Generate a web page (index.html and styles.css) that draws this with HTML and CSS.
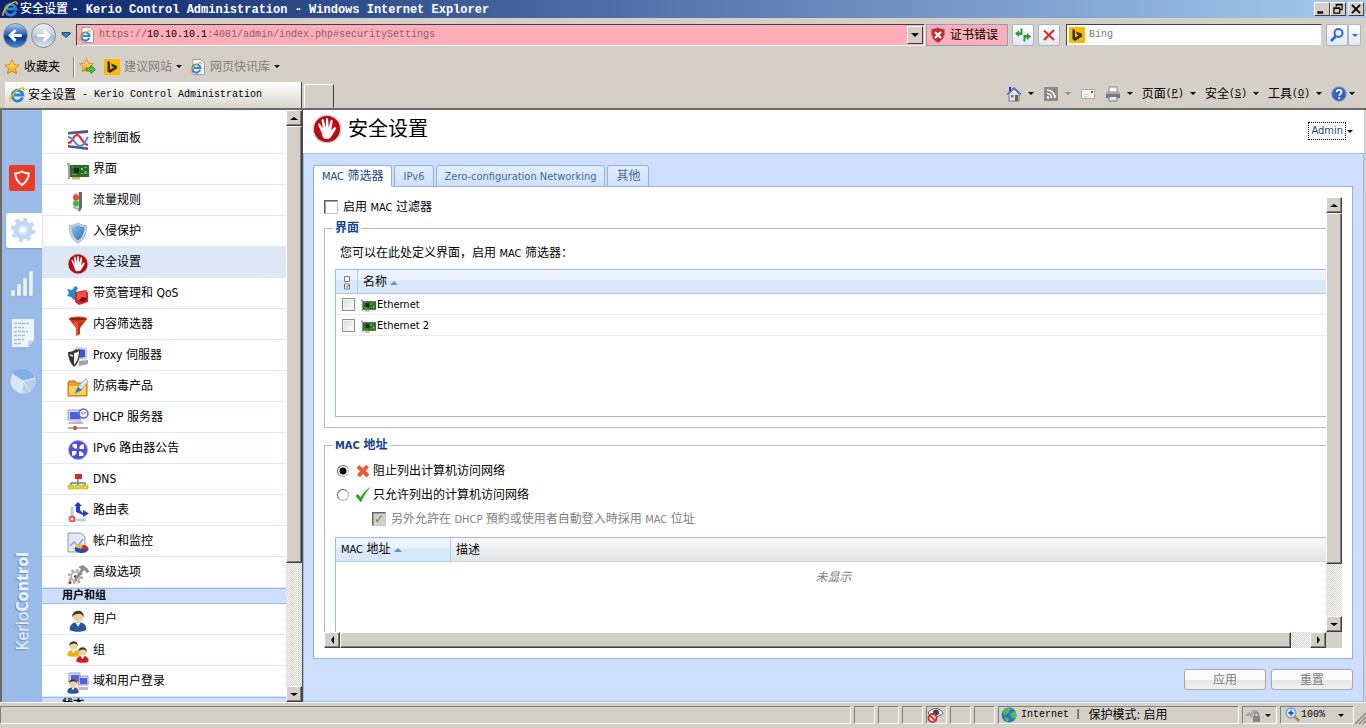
FILE: index.html
```html
<!DOCTYPE html>
<html lang="zh-CN">
<head>
  <meta charset="UTF-8" />
  <meta name="viewport" content="width=device-width, initial-scale=1.0"/>
  <title>安全设置 - Kerio Control Administration</title>
  <link rel="stylesheet" href="styles.css">
</head>
<body>
  <!-- shared icons -->
  <svg class="defs" aria-hidden="true">
    <defs>
      <radialGradient id="gRed"><stop offset="0" stop-color="#e8202a"/><stop offset="1" stop-color="#b0050c"/></radialGradient>
      <linearGradient id="gSteel" x1="0" y1="0" x2="1" y2="1"><stop offset="0" stop-color="#8cc4f2"/><stop offset="1" stop-color="#2b6cb4"/></linearGradient>
      <linearGradient id="gStar" x1="0" y1="0" x2="0" y2="1"><stop offset="0" stop-color="#ffe98a"/><stop offset="1" stop-color="#f0a011"/></linearGradient>
    </defs>
    <symbol id="ie" viewBox="0 0 16 16">
      <path d="M13.600 10.600A5.400 5.400 0 1 1 13.900 8H5" fill="none" stroke="#2a86d8" stroke-width="2.800"/>
      <path d="M1.200 14.800C-.6 12 5 4.400 11 1.600c3-1.400 4.600-.6 3.800 1.800" fill="none" stroke="#f2b01c" stroke-width="1.500"/>
    </symbol>
    <symbol id="iepage" viewBox="0 0 16 16">
      <path d="M3 .5h8l3.500 3.500v11.500H3z" fill="#fff" stroke="#9a9a9a"/>
      <use href="#ie" x="0" y="3" width="12" height="12"/>
    </symbol>
    <symbol id="bing" viewBox="0 0 16 16">
      <path d="M0 0h16v16H0z" fill="#ffb900"/>
      <path d="M3.500 2l2.500.9v7.500l4-2.100-2-.9-1-2.800 6 2.100v2.900L6 14l-2.500-1.400z" fill="#333"/>
    </symbol>
    <symbol id="star" viewBox="0 0 16 16">
      <path d="M8 .8l2.200 4.800 5.200.6-3.900 3.500 1.100 5.200L8 12.300l-4.600 2.600 1.100-5.200L.6 6.200l5.200-.6z" fill="url(#gStar)" stroke="#c98208" stroke-width=".8"/>
    </symbol>
    <symbol id="hand" viewBox="0 0 32 32">
      <circle cx="16" cy="16" r="15.300" fill="#c9c9c9"/>
      <circle cx="16" cy="16" r="13.800" fill="url(#gRed)"/>
      <path d="M10.500 20.500L6.700 11.600c-.5-1.600 1.300-2.300 2-.8l2.900 5L10.200 7c-.2-1.800 2-2.200 2.400-.4l2.200 8.300.1-9.300c0-1.700 2.200-1.700 2.300 0l.6 9.300 2-7.800c.4-1.700 2.500-1.200 2.200.5l-1.500 10.100 2.700-3c1.300-1.300 3.300-.4 2.300 1.200l-4.400 7.300c-.9 1.800-2.100 2.600-3.200 3.100l-4.600.1c-1.600-1-2.400-3.400-2.800-5.900z" fill="#fff"/>
    </symbol>
    <symbol id="card" viewBox="0 0 22 18">
      <path d="M0 2h2v15" fill="none" stroke="#8b8b8b" stroke-width="1.600"/>
      <path d="M3 3h19v12H3z" fill="#2d6b2e"/>
      <path d="M5 15h8v2.500H5z" fill="#d7b85b"/>
      <path d="M7 6h5v5H7z" fill="#12301b"/>
      <path d="M14 6h2v2h-2zM17.500 9h2v3h-2zM14 11h2v1h-2z" fill="#8fc46b"/>
      <path d="M4.500 5h2M4.500 12.500h5M17 5.500h3" stroke="#69a552"/>
    </symbol>
    <symbol id="person" viewBox="0 0 22 22">
      <path d="M3 20c0-4 2-6.500 5.500-7h5c3.500.5 5.500 3 5.500 7-4 2.300-12 2.300-16 0z" fill="currentColor"/>
      <path d="M8.500 13l2.500 4 2.500-4z" fill="#fff"/>
      <circle cx="11" cy="7.500" r="5" fill="#f3cf9c"/>
      <path d="M5.500 8c-.8-8 11.800-8.800 11 0-1.500-3-3-3.800-6-3.300C8 5 6.500 5.500 5.500 8z" fill="#3a3a34"/>
    </symbol>
  </svg>

  <header class="titlebar">
    <svg class="i16"><use href="#ie"/></svg>
    <h1>安全设置 <span>- Kerio Control Administration - Windows Internet Explorer</span></h1>
    <div class="win-buttons">
      <button aria-label="Minimize"><svg viewBox="0 0 12 10"><path d="M2 8h5" stroke="#000" stroke-width="2"/></svg></button>
      <button aria-label="Restore"><svg viewBox="0 0 12 10"><path d="M4.500 3V1.500h5v4H8M4 1h6M2.500 4.500h5v4h-5zM2 4h6" fill="none" stroke="#000"/></svg></button>
      <button class="close" aria-label="Close"><svg viewBox="0 0 12 10"><path d="M2.500 1.500l7 7M9.500 1.500l-7 7" stroke="#000" stroke-width="1.500"/></svg></button>
    </div>
  </header>

  <div class="navbar">
    <div class="history">
      <button class="round back" aria-label="Back"><svg viewBox="0 0 24 24"><path d="M18.500 12H7M12 6.500L6.500 12l5.500 5.500" fill="none" stroke="#fff" stroke-width="3"/></svg></button>
      <button class="round forward" aria-label="Forward"><svg viewBox="0 0 24 24"><path d="M5.500 12H17M12 6.500l5.500 5.500-5.500 5.500" fill="none" stroke="#fff" stroke-width="3"/></svg></button>
      <button class="flat" aria-label="Recent pages"><svg class="recent" viewBox="0 0 10 6"><path d="M1 .5h8v1.500L5 5.500 1 2z" fill="#2e88c4" stroke="#17507c"/></svg></button>
    </div>
    <div class="address">
      <svg class="i16"><use href="#iepage"/></svg>
      <div class="url" role="textbox" aria-label="Address" contenteditable="true">https://<b>10.10.10.1</b>:4081/admin/index.php#securitySettings</div>
      <button class="combo" aria-label="Show addresses"><i class="down"></i></button>
    </div>
    <button class="cert"><svg class="i16" viewBox="0 0 16 16"><path d="M8 .5c2 1.300 4 1.700 6.500 1.700C15 9 13 13.500 8 15.500 3 13.500 1 9 1.500 2.200 4 2.200 6 1.800 8 .5z" fill="#c8262b" stroke="#8d8d8d"/><path d="M5 5l6 6M11 5l-6 6" stroke="#fff" stroke-width="2.200"/></svg>证书错误</button>
    <button class="tool" aria-label="Refresh"><svg class="i16" viewBox="0 0 16 16"><path d="M0 6.500L4 3v2.500h1.500V1.500h2V8H4v2zM16 9.500L12 13v-2.500h-1.500v4h-2V8H12V6z" fill="#2e9a2e"/></svg></button>
    <button class="tool" aria-label="Stop"><svg class="i16" viewBox="0 0 16 16"><path d="M3 3.500l10 9.500M13 3L3 13" stroke="#cf3434" stroke-width="2.200"/></svg></button>
    <div class="search">
      <svg class="i16"><use href="#bing"/></svg>
      <input type="text" placeholder="Bing" aria-label="Search">
    </div>
    <div class="search-buttons">
      <button aria-label="Search"><svg class="i16" viewBox="0 0 16 16"><circle cx="9.500" cy="6" r="4" fill="#eaf3ff" stroke="#2f68d8" stroke-width="2"/><path d="M6.500 9.500L2 14" stroke="#2f68d8" stroke-width="2.600"/></svg></button>
      <button class="narrow" aria-label="Search options"><i class="down blue"></i></button>
    </div>
  </div>

  <nav class="favorites">
    <a href="#" class="fav"><svg class="i16"><use href="#star"/></svg>收藏夹</a>
    <i class="divider"></i>
    <button class="flat" aria-label="Add to favorites"><svg class="i17" viewBox="0 0 17 17"><use href="#star" width="15" height="15"/><path d="M7 10h5V7.500l4.500 4-4.500 4V13H7z" fill="#58c83c" stroke="#247d1a" stroke-width=".8"/></svg></button>
    <a href="#" class="muted"><svg class="i16"><use href="#bing"/></svg>建议网站<i class="down"></i></a>
    <a href="#" class="muted"><svg class="i16"><use href="#iepage"/></svg>网页快讯库<i class="down"></i></a>
  </nav>

  <div class="tabbar">
    <a href="#" class="browser-tab"><svg class="i16"><use href="#ie"/></svg>安全设置 <span class="mono">- Kerio Control Administration</span></a>
    <button class="new-tab" aria-label="New tab"></button>
    <div class="commands">
      <a href="#" aria-label="Home"><svg class="i16" viewBox="0 0 16 16"><path d="M3 8v7h10V8L8 3z" fill="#e6e9f2" stroke="#6c7690"/><path d="M1 8.500L8 2l7 6.500" fill="none" stroke="#5470c0" stroke-width="1.600"/><path d="M3 1h2v4H3z" fill="#24389c"/><path d="M9 9h3v6H9z" fill="#8b5a2d"/><path d="M5 9h2.500v2.500H5z" fill="#4776c4"/></svg><i class="down"></i></a>
      <a href="#" aria-label="Feeds"><svg class="i16" viewBox="0 0 16 16"><rect x="1" y="1" width="14" height="14" rx="1" fill="#8b8b8b"/><circle cx="5" cy="11.500" r="1.300" fill="#fff"/><path d="M4 7.500a4.500 4.500 0 0 1 4.500 4.500M4 4a8 8 0 0 1 8 8" fill="none" stroke="#fff" stroke-width="1.600"/></svg><i class="down gray"></i></a>
      <a href="#" aria-label="Mail"><svg class="i16" viewBox="0 0 16 16"><path d="M1.500 3.500h13v9h-13z" fill="#f7f7f7" stroke="#aaa"/><path d="M11 5h2v2h-2z" fill="#d02020"/><path d="M4 8.500h5M4 10.500h4" stroke="#ccc"/></svg></a>
      <a href="#" aria-label="Print"><svg class="i16" viewBox="0 0 16 16"><path d="M4 1h8v5H4z" fill="#fff" stroke="#888"/><path d="M1 6h14v6H1z" fill="#777"/><path d="M1 6h14v2H1z" fill="#aaa"/><path d="M4 10.500h8v4.500H4z" fill="#d8efff" stroke="#777"/></svg><i class="down"></i></a>
      <a href="#">页面<span class="mono">(<u>P</u>)</span><i class="down"></i></a>
      <a href="#">安全<span class="mono">(<u>S</u>)</span><i class="down"></i></a>
      <a href="#">工具<span class="mono">(<u>O</u>)</span><i class="down"></i></a>
      <a href="#" class="help" aria-label="Help"><svg class="i16" viewBox="0 0 16 16"><circle cx="8" cy="8" r="7.300" fill="#3563c4" stroke="#8aa3d6"/><path d="M5.500 6.300C5.500 3 10.500 3 10.500 6c0 1.800-2.300 1.900-2.300 3.800M8.200 11v2" fill="none" stroke="#fff" stroke-width="1.800"/></svg><i class="down"></i></a>
    </div>
  </div>

  <div class="page">
    <aside class="rail">
      <a href="#" class="rail-logo" aria-label="Dashboard"><svg viewBox="0 0 26 26"><rect width="26" height="26" rx="2" fill="#ea3a2a"/><path d="M13 6.500c2 1.200 4 1.800 6.800 2-.2 4.500-2.300 8.300-6.800 11.500-4.500-3.200-6.600-7-6.800-11.500 2.800-.2 4.800-.8 6.800-2z" fill="none" stroke="#fff" stroke-width="2"/></svg></a>
      <a href="#" class="rail-active" aria-label="Configuration"><svg viewBox="0 0 26 26"><circle cx="13" cy="13" r="7" fill="none" stroke="#c3d8f3" stroke-width="5"/><circle cx="13" cy="13" r="10.600" fill="none" stroke="#c3d8f3" stroke-width="3.500" stroke-dasharray="4.160 4.160"/><circle cx="13" cy="13" r="3.600" fill="none" stroke="#dce9fa" stroke-width="2"/></svg></a>
      <a href="#" class="rail-stats" aria-label="Status"><svg viewBox="0 0 26 28"><path d="M1 21h4v6H1zM7 15h4v12H7zM13 9h4v18h-4zM19 2h4v25h-4z" fill="#eff5fd" stroke="#84a6d4" stroke-width=".4"/></svg></a>
      <a href="#" class="rail-logs" aria-label="Logs"><svg viewBox="0 0 26 28"><path d="M2 0h22v21l-6 7H2z" fill="#eff5fd"/><path d="M24 21l-6 7v-6z" fill="#c5d8f0"/><path d="M4 4.500h15M4 8.500h10M4 12.500h14M4 16.500h11M4 20.500h10M4 24.500h7" stroke="#9dbde8" stroke-width="1.500" stroke-dasharray="3 1"/></svg></a>
      <a href="#" class="rail-chart" aria-label="Reports"><svg viewBox="0 0 26 26"><circle cx="13" cy="13" r="12.500" fill="#d7e5f7"/><path d="M13 13L2 6A13 13 0 0 1 25 10z" fill="#82aee8"/><path d="M13 13L25 10a12.500 12.500 0 0 1-12 15.500z" fill="#b7cfee"/><path d="M13 13L2 6M13 13l12-3M13 13l7 11M13 13L9 25" stroke="#e8f1fc"/></svg></a>
      <div class="brand">Kerio<b>Control</b></div>
    </aside>

    <nav class="menu">
      <ul>
        <li><a href="#"><svg viewBox="0 0 22 22"><path d="M1 3l20-2v20L1 18z" fill="#f5f6fb"/><path d="M1 3l20-2v3L1 5.500zM1 16l20 2.500V21L1 18.500z" fill="#55547e"/><path d="M1 14c5 0 5-8 9-8s5 9 11 10" fill="none" stroke="#e02a2a" stroke-width="2"/><path d="M1 8c6 0 7 9 12 9 4 0 5-4 8-9" fill="none" stroke="#3c8fdc" stroke-width="1.800"/></svg>控制面板</a></li>
        <li><a href="#"><svg viewBox="0 0 22 18"><use href="#card"/></svg>界面</a></li>
        <li><a href="#"><svg viewBox="0 0 22 22"><path d="M6 3l8-2v19l-2 1-3-3-3-1z" fill="#aaa"/><path d="M12 1h3v16l-3 3z" fill="#686868"/><path d="M6 3l6-1v15l-6-1z" fill="#d8d8d8"/><circle cx="9" cy="6.500" r="2.900" fill="#f04426"/><circle cx="9" cy="12.500" r="2.900" fill="#2cc42c"/></svg>流量规则</a></li>
        <li><a href="#"><svg viewBox="0 0 22 22"><path d="M11 1c3 2 5.500 2.500 8.500 2.500 0 8-2 14-8.500 17.500C4.500 17.500 2.500 11.500 2.500 3.500 5.500 3.500 8 3 11 1z" fill="#cbd8e4" stroke="#a5b0bb"/><path d="M11 3c2 1.300 4 2 6.500 2-.2 6-2 10.500-6.500 13.500C6.500 15.500 4.700 11 4.500 5 7 5 9 4.300 11 3z" fill="url(#gSteel)"/></svg>入侵保护</a></li>
        <li class="active"><a href="#"><svg viewBox="0 0 32 32"><use href="#hand"/></svg>安全设置</a></li>
        <li><a href="#"><svg viewBox="0 0 22 22"><path d="M0 5l5 1 3-4 3 2-2 4 4 1-1 6-5 1-3-3-4-1 2-3z" fill="#238bca"/><path d="M8 8l11-2 2 3v9l-9 3-4-3z" fill="#d32a22"/><path d="M10 9l9-2v8l-9 1z" fill="#ef5544"/><path d="M12 17l3-4 5 1-3 4z" fill="#77100f"/></svg>带宽管理和 QoS</a></li>
        <li><a href="#"><svg viewBox="0 0 22 22"><path d="M2 4l7 9v8l4-2v-6l7-9z" fill="#cf2f14"/><path d="M9 13v7l2-1V7H6z" fill="#e8552e"/><ellipse cx="11" cy="4" rx="9" ry="2" fill="#8f1d10" stroke="#e54a28"/></svg>内容筛选器</a></li>
        <li><a href="#"><svg viewBox="0 0 22 22"><path d="M9 1l11 1v11l-10 1z" fill="#c5cbdc"/><path d="M11 3l7 1v7l-7 1z" fill="#3c58d4"/><path d="M12 15l9-1v4l-9 2z" fill="#9ba2ae"/><path d="M1 6c3 0 6-1 8-3 1 1 2 1 4 1 0 8-2 14-6 17-4-4-6-9-6-15z" fill="#353535"/><path d="M7 7c2 0 3-1 5-2 0 6-2 11-5 14z" fill="#f2f2f2"/><path d="M3 9l3 1M8 10l3-2" stroke="#eee" stroke-width="1.500"/></svg>Proxy 伺服器</a></li>
        <li><a href="#"><svg viewBox="0 0 22 22"><path d="M1 5l1-1h6l2 2h10v13H1z" fill="#e7a12c" stroke="#b97712"/><path d="M2 9h17v9H2z" fill="#fcd25b"/><path d="M19 1l-8 9-3 7 6-4 7-8z" fill="#dce8f3" stroke="#8ba3bd" stroke-width=".8"/><path d="M8 16l3-6 4 3z" fill="#2279c5"/></svg>防病毒产品</a></li>
        <li><a href="#"><svg viewBox="0 0 22 22"><path d="M1 2h13v10H1z" fill="#d7dbe7" stroke="#9ba0ae"/><path d="M3 4h10v7H3z" fill="#4b5ee8"/><path d="M2 14l12-1 3 3H1z" fill="#b7bbc2"/><circle cx="16.500" cy="5.500" r="4.500" fill="#eef4ff" stroke="#5370bc" stroke-width="1.500"/><path d="M14 4l2.500 2L19 4" fill="none" stroke="#d24444"/><path d="M1 20h20" stroke="#777" stroke-width="1.200"/><path d="M8 18v4" stroke="#e33c2d" stroke-width="3"/></svg>DHCP 服务器</a></li>
        <li><a href="#"><svg viewBox="0 0 22 22"><circle cx="11" cy="11" r="9.500" fill="#4b52cf" stroke="#9ba0ec"/><path d="M5 5h5v5zM17 5v5h-5zM5 17v-5h5zM17 17h-5v-5z" fill="#fff"/><path d="M6 6l3 3M16 6l-3 3M6 16l3-3M16 16l-3-3" stroke="#fff" stroke-width="2.500"/></svg>IPv6 路由器公告</a></li>
        <li><a href="#"><svg viewBox="0 0 22 22"><path d="M11 8v5M4 17v-4h14v4M11 13v4" fill="none" stroke="#7e7e7e" stroke-width="1.500"/><path d="M8 4h7v5H8z" fill="#de2828"/><path d="M1 15h6v4H1zM8 15h6v4H8zM15 15h6v4h-6z" fill="#dcd72b" stroke="#b1ac1e" stroke-width=".6"/></svg>DNS</a></li>
        <li><a href="#"><svg viewBox="0 0 22 22"><path d="M5 19V6M5 19h14" stroke="#c4cbdd" stroke-width="3"/><path d="M7 5l4-4 4 4h-2v4l3 3V9l6 3.500-6 3.500v-2l-7-3V5z" fill="#2340cc"/><circle cx="5" cy="18" r="2.400" fill="#fff" stroke="#ee3e3e" stroke-width="1.700"/></svg>路由表</a></li>
        <li><a href="#"><svg viewBox="0 0 22 22"><path d="M1 1h13l4 4v15H1z" fill="#e3e9f6" stroke="#8d99b6"/><path d="M3 14l4-4 4 4 5-7" fill="none" stroke="#92a4c9" stroke-width="1.500"/><ellipse cx="14.500" cy="17" rx="7" ry="4" fill="#2948b8"/><path d="M14.500 17L8 15c2-3 6-3 8-2z" fill="#f3c126"/><path d="M14.500 17L16 13c4 0 6 3 5 5z" fill="#d3292b"/></svg>帐户和监控</a></li>
        <li><a href="#"><svg viewBox="0 0 22 22"><circle cx="8.500" cy="13.500" r="4.500" fill="#fff" stroke="#b4b4b4" stroke-width="2"/><circle cx="8.500" cy="13.500" r="6.500" fill="none" stroke="#a5a5a5" stroke-width="2" stroke-dasharray="2.550 2.550"/><circle cx="8.500" cy="13.500" r="1.600" fill="#c32727"/><path d="M11 4l5-2 5 4 1 3-2 1-3-3-8 11-2-1 7-11z" fill="#8e8e8e"/><circle cx="3" cy="19.500" r="1.500" fill="#c32727"/></svg>高级选项</a></li>
      </ul>
      <h2>用户和组</h2>
      <ul>
        <li><a href="#"><svg class="c-blue" viewBox="1 1 20 21"><use href="#person" width="22" height="22"/></svg>用户</a></li>
        <li><a href="#"><svg viewBox="0 0 22 22"><use class="c-yellow" href="#person" x="-2" y="-1" width="17" height="17"/><use class="c-red" href="#person" x="7" y="5" width="17" height="17"/></svg>组</a></li>
        <li><a href="#"><svg class="c-blue" viewBox="0 0 22 22"><path d="M2 1h11v9H2zM11 4h10v9H11z" fill="#cfd3e6" stroke="#979dbd"/><path d="M4 3h8v6H4zM13 6h7v6h-7z" fill="#4d62e6"/><path d="M12 15h9v3h-9z" fill="#b9bcc9"/><use href="#person" x="-2" y="6" width="16" height="16"/></svg>域和用户登录</a></li>
      </ul>
      <h2>状态</h2>
    </nav>
    <div class="scroll-v menu-scroll">
      <button aria-label="Scroll up"><i class="up"></i></button>
      <div class="thumb"></div>
      <div class="track"></div>
      <button aria-label="Scroll down"><i class="down"></i></button>
    </div>

    <main>
      <div class="heading">
        <svg viewBox="0 0 32 32"><use href="#hand"/></svg>
        <h2>安全设置</h2>
        <button class="user"><span>Admin</span><i class="down"></i></button>
      </div>

      <div class="workspace">
        <div class="tabs" role="tablist">
          <button role="tab" class="selected" aria-selected="true"><span class="latin">MAC</span> 筛选器</button>
          <button role="tab"><span class="latin">IPv6</span></button>
          <button role="tab"><span class="latin">Zero-configuration Networking</span></button>
          <button role="tab">其他</button>
        </div>

        <div class="panel">
          <div class="view">
            <div class="content">
              <div class="enable">
                <input type="checkbox" id="enable-mac">
                <label for="enable-mac">启用 <span class="latin">MAC</span> 过滤器</label>
              </div>

              <fieldset class="interfaces">
                <legend>界面</legend>
                <p>您可以在此处定义界面，启用 <span class="latin">MAC</span> 筛选器：</p>
                <div class="grid">
                  <table>
                    <thead>
                      <tr>
                        <th class="pick"><svg viewBox="0 0 8 14"><path d="M1.500.5h5v5h-5zM1.500 8h5v5h-5z" fill="#fff" stroke="#777"/><path d="M2.500 10l1.500 1.500L6 9" fill="none" stroke="#3c68ad"/></svg></th>
                        <th>名称 <i class="sort"></i></th>
                      </tr>
                    </thead>
                    <tbody>
                      <tr>
                        <td class="pick"><input type="checkbox" id="eth1"></td>
                        <td><label class="latin" for="eth1"><svg viewBox="0 0 22 18" preserveAspectRatio="none"><use href="#card"/></svg>Ethernet</label></td>
                      </tr>
                      <tr>
                        <td class="pick"><input type="checkbox" id="eth2"></td>
                        <td><label class="latin" for="eth2"><svg viewBox="0 0 22 18" preserveAspectRatio="none"><use href="#card"/></svg>Ethernet 2</label></td>
                      </tr>
                    </tbody>
                  </table>
                </div>
              </fieldset>

              <fieldset class="addresses">
                <legend><span class="latin">MAC</span> 地址</legend>
                <div class="option">
                  <input type="radio" name="mode" id="deny" checked>
                  <label for="deny"><svg viewBox="0 0 16 16"><path d="M3 3.500l10 9.500M12.500 3L3.500 13" stroke="#f1553b" stroke-width="4"/></svg>阻止列出计算机访问网络</label>
                </div>
                <div class="option">
                  <input type="radio" name="mode" id="allow">
                  <label for="allow"><svg viewBox="0 0 16 16"><path d="M.5 9l2.500-2 2.500 3.500C8 6 11 2.500 15.500 0 11 5 8.500 9.500 6 15.500z" fill="#1cae1c"/></svg>只允许列出的计算机访问网络</label>
                </div>
                <div class="option sub">
                  <input type="checkbox" id="dhcp" checked disabled>
                  <label for="dhcp">另外允許在 <span class="latin">DHCP</span> 預約或使用者自動登入時採用 <span class="latin">MAC</span> 位址</label>
                </div>
                <div class="grid">
                  <table>
                    <thead>
                      <tr>
                        <th class="mac"><span class="latin">MAC</span> 地址 <i class="sort"></i></th>
                        <th class="plain">描述</th>
                      </tr>
                    </thead>
                    <tbody>
                      <tr class="empty"><td colspan="2">未显示</td></tr>
                    </tbody>
                  </table>
                </div>
              </fieldset>
            </div>
          </div>
          <div class="scroll-v">
            <button aria-label="Scroll up"><i class="up"></i></button>
            <div class="thumb"></div>
            <div class="track"></div>
            <button aria-label="Scroll down"><i class="down"></i></button>
          </div>
          <div class="scroll-h">
            <button aria-label="Scroll left"><i class="left"></i></button>
            <div class="thumb"></div>
            <div class="track"></div>
            <button aria-label="Scroll right"><i class="right"></i></button>
          </div>
          <div class="corner"></div>
        </div>

        <div class="actions">
          <button disabled>应用</button>
          <button disabled>重置</button>
        </div>
      </div>
    </main>
  </div>

  <footer class="statusbar">
    <div class="pane message"></div>
    <div class="pane"></div>
    <div class="pane"></div>
    <div class="pane"></div>
    <div class="pane"><svg class="i16" viewBox="0 0 16 16"><path d="M1 6c4-6 11-6 15 0-4 5-11 5-15 0z" fill="#fff" stroke="#555"/><circle cx="9" cy="5.500" r="3" fill="#444"/><circle cx="5.500" cy="11" r="4" fill="#fff" stroke="#d62d2d" stroke-width="2"/><path d="M3 8.500l5 5" stroke="#d62d2d" stroke-width="1.800"/></svg></div>
    <div class="pane"></div>
    <div class="pane"></div>
    <div class="pane zone"><svg class="i16" viewBox="0 0 16 16"><circle cx="8" cy="8" r="7.500" fill="#2f74d0"/><path d="M2 4c3-4 7-4 8-2L8 5 5 8 2 7zM9 7l5-3c2 3 2 6 0 8l-3-1zM3 10l5 1-1 4c-3-1-4-3-4-5z" fill="#57b947"/></svg><span class="mono">Internet |</span> 保护模式: 启用</div>
    <div class="pane lock"><svg class="i16" viewBox="0 0 16 16"><path d="M0 9l5-5v3c3-6 6-5 8-2-3-1-5 1-6 5l-2 2V9z" fill="#aaa"/><path d="M8 9h7v6H8z" fill="#888"/><path d="M9.500 9V7.500a2 2 0 0 1 4 0V9" fill="none" stroke="#888" stroke-width="1.500"/></svg><i class="down"></i></div>
    <div class="pane magnify"><svg class="i16" viewBox="0 0 16 16"><path d="M9 9l5 5" stroke="#b7884a" stroke-width="3"/><circle cx="6" cy="6" r="4.800" fill="#d9ecff" stroke="#7ba0d2" stroke-width="1.500"/><path d="M6 3.500v5M3.500 6h5" stroke="#1c56c8" stroke-width="1.800"/></svg><span class="mono">100%</span><i class="down"></i></div>
    <svg class="grip" viewBox="0 0 12 14"><path d="M1 13L12 2M5 13l7-7M9 13l3-3" stroke="#8a867e" stroke-width="1.500"/></svg>
  </footer>
</body>
</html>
```
FILE: styles.css
```css
* {
  margin: 0;
  padding: 0;
  box-sizing: border-box;
}
body {
  height: 100vh;
  display: flex;
  flex-direction: column;
  overflow: hidden;
  background: #d4d0c8;
  color: #000;
  font-family: "DejaVu Sans Condensed", "Noto Sans CJK SC", sans-serif;
  font-size: 12px;
  line-height: 16px;
}
button, input {
  font: inherit;
  color: inherit;
}
a {
  color: inherit;
  text-decoration: none;
}
ul {
  list-style: none;
}
.defs {
  position: absolute;
  width: 0;
  height: 0;
}
.i16 {
  width: 16px;
  height: 16px;
  flex: none;
}
.i17 {
  width: 17px;
  height: 17px;
  display: block;
}
.flat {
  background: none;
  border: none;
}
.mono {
  font-family: "Liberation Mono", monospace;
  font-size: 10px;
}
.latin {
  font-size: 11px;
}

/* small arrows */
.down, .up, .left, .right, .sort {
  display: inline-block;
  flex: none;
  border: 3px solid transparent;
}
.down {
  border-top-color: #000;
  border-bottom: none;
}
.up {
  border-bottom-color: #000;
  border-top: none;
}
.left {
  border-right-color: #000;
  border-left: none;
}
.right {
  border-left-color: #000;
  border-right: none;
}
.down.blue {
  border-top-color: #2f68d8;
}
.down.gray {
  border-top-color: #8b8b8b;
}
.sort {
  border-width: 4px;
  border-bottom-color: #6593cf;
  border-top: none;
  vertical-align: 1px;
}

/* window title */
.titlebar {
  height: 18px;
  flex: none;
  display: flex;
  align-items: center;
  gap: 2px;
  padding: 0 2px;
  background: linear-gradient(to right, #0a246a, #a6caf0);
  color: #fff;
}
.titlebar h1 {
  flex: 1;
  font-size: 12px;
  white-space: nowrap;
  font-weight: 500;
}
.titlebar span {
  font-family: "Liberation Mono", monospace;
  font-size: 12px;
  font-weight: bold;
}
.win-buttons {
  display: flex;
}
.win-buttons button {
  width: 16px;
  height: 14px;
  background: #d4d0c8;
  border: 1px solid;
  border-color: #fff #404040 #404040 #fff;
}
.win-buttons svg {
  display: block;
  width: 14px;
  height: 12px;
}
.win-buttons .close {
  margin-left: 2px;
}

/* address row */
.navbar {
  height: 34px;
  flex: none;
  display: flex;
  align-items: center;
  padding: 0 5px 0 3px;
}
.history {
  display: flex;
  align-items: center;
  width: 73px;
  gap: 3px;
}
.round {
  width: 25px;
  height: 25px;
  border-radius: 50%;
  border: 1px solid #7b8ba5;
}
.round svg {
  display: block;
  width: 23px;
  height: 23px;
}
.back {
  background: linear-gradient(#a9c8ee, #2d63b8 45%, #0d3686 55%, #3f86d6);
}
.forward {
  background: linear-gradient(#eef2f8, #c5d0e2 45%, #a9b8d0 55%, #e1e9f5);
}
.recent {
  display: block;
  width: 10px;
  height: 6px;
  margin-left: 2px;
}
.address {
  flex: 1;
  height: 22px;
  display: flex;
  align-items: center;
  gap: 4px;
  padding: 1px 1px 1px 2px;
  background: #ffadb8;
  border: 1px solid;
  border-color: #404040 #fff #fff #404040;
}
.url {
  flex: 1;
  font-family: "Liberation Mono", monospace;
  font-size: 10px;
  color: #80636a;
}
.url b {
  font-weight: normal;
  color: #000;
}
.combo {
  width: 16px;
  height: 18px;
  display: flex;
  align-items: center;
  justify-content: center;
  background: #d4d0c8;
  border: 1px solid;
  border-color: #fff #404040 #404040 #fff;
}
.combo .down {
  border-width: 4px 4px 0;
}
.cert {
  display: flex;
  align-items: center;
  gap: 4px;
  height: 22px;
  width: 82px;
  margin: 0 4px 0 1px;
  padding: 0 3px;
  background: #ffadb8;
  border: 1px solid #8ba0b8;
  white-space: nowrap;
}
.tool, .search-buttons button {
  display: flex;
  align-items: center;
  justify-content: center;
  width: 22px;
  height: 22px;
  background: linear-gradient(#fff, #e3e8f1);
  border: 1px solid #a8b4c8;
  border-radius: 2px;
}
.tool {
  margin-right: 4px;
}
.search {
  width: 256px;
  height: 22px;
  display: flex;
  align-items: center;
  gap: 4px;
  margin: 0 4px 0 2px;
  padding: 0 2px;
  background: #fff;
  border: 1px solid;
  border-color: #404040 #d4d0c8 #d4d0c8 #404040;
}
.search input {
  flex: 1;
  min-width: 0;
  border: none;
  outline: none;
  font-family: "Liberation Mono", monospace;
  font-size: 10px;
}
.search input::placeholder {
  color: #7a7a7a;
}
.search-buttons {
  display: flex;
}
.search-buttons .narrow {
  width: 13px;
}

/* favorites */
.favorites {
  height: 29px;
  flex: none;
  display: flex;
  align-items: center;
  padding-left: 4px;
}
.favorites a {
  display: flex;
  align-items: center;
  gap: 4px;
}
.favorites .muted {
  color: #808080;
  margin-left: 8px;
}
.divider {
  width: 2px;
  height: 20px;
  margin: 0 4px 0 13px;
  border-left: 1px solid #808080;
  border-right: 1px solid #fff;
}

/* browser tabs and commands */
.tabbar {
  height: 29px;
  flex: none;
  display: flex;
  align-items: flex-end;
  padding: 0 11px 0 5px;
  border-bottom: 2px solid #6b6964;
}
.browser-tab {
  width: 297px;
  height: 26px;
  display: flex;
  align-items: center;
  gap: 3px;
  padding-left: 4px;
  background: linear-gradient(#fff, #d8d5ce);
  border-right: 1px solid #404040;
}
.browser-tab .mono {
  margin-left: 3px;
}
.new-tab {
  width: 30px;
  height: 24px;
  margin-left: 2px;
  background: #d4d0c8;
  border: 1px solid;
  border-color: #fff #404040 #d4d0c8 #fff;
}
.commands {
  margin-left: auto;
  height: 29px;
  display: flex;
  align-items: center;
  gap: 9px;
}
.commands a {
  display: flex;
  align-items: center;
  gap: 6px;
}
.commands .mono {
  margin-left: -6px;
}
.commands .help {
  gap: 2px;
}

/* admin page */
.page {
  flex: 1;
  min-height: 0;
  display: flex;
  background: #fff;
  border-left: 2px solid #6b6964;
  border-right: 2px solid #d4d0c8;
}
.rail {
  width: 40px;
  flex: none;
  display: flex;
  flex-direction: column;
  padding-top: 54px;
  background: #9abbe7;
}
.rail svg {
  display: block;
  width: 26px;
  height: 28px;
}
.rail a {
  padding-left: 8px;
}
.rail .rail-logo {
  padding-left: 7px;
  margin-bottom: 21px;
}
.rail .rail-active {
  height: 35px;
  margin: 0 0 21px 4px;
  padding: 3px 0 0 4px;
  background: #fff;
  border-radius: 3px 0 0 3px;
  box-shadow: 0 1px 2px #7897c4;
}
.rail-stats {
  margin-bottom: 22px;
}
.rail-logs {
  margin-bottom: 20px;
}
.brand {
  writing-mode: vertical-rl;
  transform: rotate(180deg);
  margin: auto 10px 51px auto;
  font-family: "Open Sans", sans-serif;
  font-size: 16px;
  line-height: 20px;
  color: #f0f6fe;
  text-shadow: -1px -1px 1px #6d90c2;
}
.menu {
  width: 244px;
  flex: none;
  overflow: hidden;
  padding-top: 13px;
}
.menu a {
  height: 31px;
  display: flex;
  align-items: center;
  gap: 4px;
  padding-left: 25px;
  border-bottom: 1px solid #dce6f5;
}
.menu svg {
  width: 22px;
  height: 22px;
  margin-top: 3px;
}
.menu .active a {
  background: #dee7f6;
}
.menu h2 {
  height: 16px;
  padding-left: 20px;
  background: #cedeff;
  border: solid #99bbe8;
  border-width: 1px 0;
  font-size: 11px;
  line-height: 14px;
}
.c-blue {
  color: #28569a;
}
.c-yellow {
  color: #efaf16;
}
.c-red {
  color: #cf1d1d;
}

/* scroll bars */
.scroll-v, .scroll-h {
  display: flex;
  background: repeating-conic-gradient(#d4d0c8 0 25%, #fff 0 50%) 0 0 / 2px 2px;
}
.scroll-v {
  width: 16px;
  flex-direction: column;
}
.scroll-h {
  height: 16px;
}
.scroll-v button, .scroll-h button {
  width: 16px;
  height: 16px;
  flex: none;
  display: flex;
  align-items: center;
  justify-content: center;
}
.scroll-v .down, .scroll-v .up {
  border-left-width: 4px;
  border-right-width: 4px;
}
.scroll-h .left, .scroll-h .right {
  border-top-width: 4px;
  border-bottom-width: 4px;
}
.scroll-v button, .scroll-h button, .thumb {
  background: #d4d0c8;
  border: 1px solid;
  border-color: #fff #404040 #404040 #fff;
  box-shadow: inset -1px -1px #808080;
}
.thumb {
  flex: 87 1 0;
}
.track {
  flex: 13 1 0;
}
.scroll-h .thumb {
  flex-grow: 98;
}
.scroll-h .track {
  flex-grow: 2;
}
.corner {
  background: #d4d0c8;
}
.menu-scroll {
  flex: none;
}
.menu-scroll .thumb {
  flex-grow: 78;
}
.menu-scroll .track {
  flex-grow: 22;
}

/* main area */
main {
  flex: 1;
  min-width: 0;
  display: flex;
  flex-direction: column;
  border-left: 1px solid #505050;
}
.heading {
  height: 44px;
  flex: none;
  display: flex;
  align-items: center;
  padding: 0 11px 6px 9px;
  border-bottom: 1px solid #99bbe8;
}
.heading svg {
  width: 30px;
  height: 30px;
}
.heading h2 {
  flex: 1;
  margin-left: 6px;
  font-size: 20px;
  font-weight: normal;
}
.user {
  display: flex;
  align-items: center;
  gap: 1px;
  margin-top: 5px;
  background: none;
  border: none;
  font-size: 11px;
  color: #15428b;
}
.user span {
  padding: 0 2px;
  border: 1px dotted #000;
}
.workspace {
  flex: 1;
  min-height: 0;
  display: flex;
  flex-direction: column;
  padding: 11px 10px 0 9px;
  background: #cedeff;
  border: solid #99bbe8;
  border-width: 0 1px 1px;
}
.tabs {
  display: flex;
  align-items: flex-end;
  gap: 2px;
  margin-bottom: -1px;
  z-index: 1;
}
.tabs button {
  height: 22px;
  padding: 0 8px;
  background: linear-gradient(#e4effd, #cfe0fa);
  border: 1px solid #8db2e3;
  border-radius: 3px 3px 0 0;
  color: #416aa3;
  white-space: nowrap;
}
.tabs .selected {
  background: #fff;
  border-bottom-color: #fff;
  color: #15428b;
}
.panel {
  flex: 1;
  min-height: 0;
  display: grid;
  grid-template-columns: minmax(0, 1fr) 16px;
  grid-template-rows: minmax(0, 1fr) 16px;
  padding: 10px;
  background: #fff;
  border: 1px solid #8db2e3;
}
.view {
  overflow: hidden;
}
.content {
  width: calc(100% + 17px);
}
.enable {
  display: flex;
  align-items: center;
  gap: 5px;
  height: 20px;
  margin-bottom: 3px;
}
input[type="checkbox"] {
  appearance: none;
  width: 14px;
  height: 14px;
  flex: none;
  background: #fff;
  border: 1px solid;
  border-color: #606060 #c8c4bc #c8c4bc #606060;
  box-shadow: inset 1px 1px #a0a0a0;
}
input[type="checkbox"]:disabled {
  background: #d4d0c8;
}
input[type="checkbox"]:disabled:checked::before {
  content: "✓";
  display: block;
  font: bold 12px/12px "DejaVu Sans", sans-serif;
  text-align: center;
  color: #707070;
}
input[type="radio"] {
  appearance: none;
  width: 12px;
  height: 12px;
  flex: none;
  background: #fff;
  border: 1px solid;
  border-color: #606060 #b8b4ac #b8b4ac #606060;
  border-radius: 50%;
}
input[type="radio"]:checked {
  background: radial-gradient(#000 0 3px, #fff 4px);
}
fieldset {
  padding: 0 10px 10px;
  border: 1px solid #b5b8c8;
}
legend {
  margin-left: -2px;
  padding: 0 2px;
  color: #15428b;
  font-weight: bold;
}
.interfaces p {
  padding: 9px 5px 7px;
}
.grid {
  height: 148px;
  border: 1px solid #99bbe8;
}
.grid table {
  width: 100%;
  border-collapse: separate;
  border-spacing: 0;
  table-layout: fixed;
}
.grid th {
  height: 24px;
  padding: 0 5px;
  text-align: left;
  font-weight: normal;
  background: linear-gradient(#ebf3fd 45%, #d9e8fb 45%);
  border-bottom: 1px solid #aaccf6;
}
.grid td {
  height: 21px;
  padding: 2px 3px 0;
  border-bottom: 1px solid #ededed;
}
.grid td label {
  display: flex;
  align-items: center;
  gap: 1px;
}
.grid td svg {
  width: 15px;
  height: 13px;
}
.grid .pick {
  width: 22px;
  padding: 0;
  text-align: center;
}
.grid th.pick {
  border-right: 1px solid #aaccf6;
}
.grid td.pick {
  padding: 1px 0 0 6px;
}
.grid th.pick svg {
  display: block;
  width: 8px;
  height: 14px;
  margin: 3px auto 0;
}
.grid td input {
  display: block;
  width: 13px;
  height: 13px;
  background: linear-gradient(135deg, #d8dade, #fff);
  border-color: #8e8f8f;
  box-shadow: inset 0 0 0 1px #f4f4f4;
}
.grid .mac {
  width: 115px;
  border-right: 1px solid #aaccf6;
}
.grid th.plain {
  background: linear-gradient(#f9f9f9, #e3e4e6);
  border-bottom-color: #d0d0d0;
}
.grid .empty td {
  height: 30px;
  border: none;
  padding-top: 0;
  text-align: center;
  font-style: italic;
  color: #808080;
}
.addresses {
  margin-top: 9px;
}
.option {
  height: 24px;
  display: flex;
  align-items: center;
  gap: 6px;
  padding-left: 2px;
}
.addresses legend + .option {
  margin-top: 5px;
}
.option label {
  display: flex;
  align-items: center;
  gap: 2px;
}
.option svg {
  width: 16px;
  height: 16px;
}
.option.sub {
  padding-left: 37px;
  gap: 5px;
  color: #808080;
}
.option.sub label {
  display: block;
}
.addresses .grid {
  margin-top: 6px;
}
.actions {
  height: 42px;
  flex: none;
  display: flex;
  justify-content: flex-end;
  gap: 5px;
  padding-top: 10px;
}
.actions button {
  width: 82px;
  height: 21px;
  background: linear-gradient(#fbfbfb 55%, #e6e6e6 55%, #f2f2f2);
  border: 1px solid #a6a6a6;
  border-radius: 3px;
  color: #808080;
}

/* status bar */
.statusbar {
  height: 26px;
  flex: none;
  display: flex;
  gap: 3px;
  padding: 3px 0 4px;
  border-top: 1px solid #fff;
}
.pane {
  width: 21px;
  display: flex;
  align-items: center;
  gap: 4px;
  border: 1px solid;
  border-color: #808080 #fff #fff #808080;
  white-space: pre;
}
.message {
  flex: 1;
}
.zone {
  width: 241px;
  padding-left: 2px;
}
.lock {
  width: 35px;
  padding-left: 2px;
}
.magnify {
  width: 74px;
  padding-left: 4px;
  gap: 0;
}
.magnify .down {
  margin-left: 13px;
}
.grip {
  width: 12px;
  height: 14px;
  margin: 5px 0 0 -3px;
}
```
